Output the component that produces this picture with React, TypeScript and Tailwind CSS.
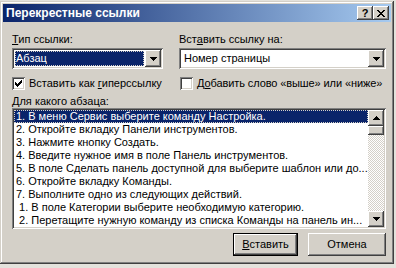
import React from 'react';

const raised =
  'shadow-[inset_-1px_-1px_#404040,inset_1px_1px_#ffffff,inset_-2px_-2px_#808080,inset_2px_2px_#d4d0c8]';
const sunken =
  'shadow-[inset_1px_1px_#808080,inset_-1px_-1px_#ffffff,inset_2px_2px_#404040,inset_-2px_-2px_#d4d0c8]';

function ArrowDown() {
  return (
    <svg width="7" height="4" viewBox="0 0 7 4" shapeRendering="crispEdges">
      <path d="M0 0h7v1H0zM1 1h5v1H1zM2 2h3v1H2zM3 3h1v1H3z" fill="#000" />
    </svg>
  );
}

function ArrowUp() {
  return (
    <svg width="7" height="4" viewBox="0 0 7 4" shapeRendering="crispEdges">
      <path d="M3 0h1v1H3zM2 1h3v1H2zM1 2h5v1H1zM0 3h7v1H0z" fill="#000" />
    </svg>
  );
}

function Check() {
  return (
    <svg width="7" height="7" viewBox="0 0 7 7" shapeRendering="crispEdges">
      <path
        d="M6 0h1v3H6zM5 1h1v3H5zM0 2h1v3H0zM4 2h1v3H4zM1 3h1v3H1zM3 3h1v3H3zM2 4h1v3H2z"
        fill="#000"
      />
    </svg>
  );
}

function DropButton() {
  return (
    <div className={`w-[16px] h-[17px] bg-[#d4d0c8] ${raised} flex items-center justify-center`}>
      <ArrowDown />
    </div>
  );
}

function Combo({ value, selected }: { value: string; selected?: boolean }) {
  return (
    <div className={`h-[21px] bg-white ${sunken} p-[2px] flex`}>
      <div className="flex-1 p-[1px]">
        {selected ? (
          <div className="h-full bg-[#0a246a] text-white outline outline-1 outline-dotted outline-[#d4d0c8] -outline-offset-1 pl-[1px] leading-[15px]">
            {value}
          </div>
        ) : (
          <div className="h-full pl-[2px] leading-[15px]">{value}</div>
        )}
      </div>
      <DropButton />
    </div>
  );
}

function CheckBox({ checked }: { checked?: boolean }) {
  return (
    <div className={`w-[13px] h-[13px] bg-white ${sunken} flex items-center justify-center shrink-0`}>
      {checked && <Check />}
    </div>
  );
}

const items = [
  '1. В меню Сервис выберите команду Настройка.',
  '2. Откройте вкладку Панели инструментов.',
  '3. Нажмите кнопку Создать.',
  '4. Введите нужное имя в поле Панель инструментов.',
  '5. В поле Сделать панель доступной для выберите шаблон или до...',
  '6. Откройте вкладку Команды.',
  '7. Выполните одно из следующих действий.',
  ' 1. В поле Категории выберите необходимую категорию.',
  ' 2. Перетащите нужную команду из списка Команды на панель ин...',
];

export default function App() {
  return (
    <div className="w-[396px] h-[268px] overflow-hidden bg-[#e4e2dc] pt-[1px] font-['Liberation_Sans',Arial,sans-serif] text-[11px] leading-[13px] text-black">
      <div
        className={`w-[394px] h-[263px] bg-[#d4d0c8] p-[3px] flex flex-col shadow-[inset_-1px_-1px_#404040,inset_1px_1px_#d4d0c8,inset_-2px_-2px_#808080,inset_2px_2px_#ffffff]`}
      >
        {/* заголовок */}
        <div className="h-[18px] flex items-center bg-[linear-gradient(90deg,#0a246a,#a6caf0)] pl-[3px] pr-[2px]">
          <span className="flex-1 text-white font-bold text-[12px]">Перекрестные ссылки</span>
          <div className={`w-[16px] h-[14px] bg-[#d4d0c8] ${raised} flex items-center justify-center font-bold text-[11px] leading-none`}>
            ?
          </div>
          <div className={`w-[16px] h-[14px] bg-[#d4d0c8] ${raised} flex items-center justify-center`}>
            <svg width="8" height="7" viewBox="0 0 8 7" shapeRendering="crispEdges">
              <path
                d="M0 0h2v1H0zM6 0h2v1H6zM1 1h2v1H1zM5 1h2v1H5zM2 2h4v1H2zM3 3h2v1H3zM2 4h4v1H2zM1 5h2v1H1zM5 5h2v1H5zM0 6h2v1H0zM6 6h2v1H6z"
                fill="#000"
              />
            </svg>
          </div>
        </div>

        <div className="flex-1 pl-[9px] pr-[5px] pt-[11px] flex flex-col">
          <div className="flex gap-[16px]">
            <div className="w-[151px] flex flex-col gap-[1px]">
              <div className="mb-[1px]">
                <span className="underline">Т</span>ип ссылки:
              </div>
              <Combo value="Абзац" selected />
            </div>
            <div className="flex-1 flex flex-col gap-[1px]">
              <div className="mb-[1px]">
                Вст<span className="underline">а</span>вить ссылку на:
              </div>
              <Combo value="Номер страницы" />
            </div>
          </div>

          <div className="flex mt-[8px] h-[13px]">
            <div className="w-[167px] flex items-center gap-[4px]">
              <CheckBox checked />
              <span>
                Вставить как <span className="underline">г</span>иперссылку
              </span>
            </div>
            <div className="flex items-center gap-[4px] pl-[1px] whitespace-nowrap tracking-[-0.1px]">
              <CheckBox />
              <span>
                Д<span className="underline">о</span>бавить слово «выше» или «ниже»
              </span>
            </div>
          </div>

          <div className="mt-[5px]">
            <span className="underline">Д</span>ля какого абзаца:
          </div>

          <div className={`h-[121px] bg-white ${sunken} p-[2px] flex`}>
            <div className="flex-1 flex flex-col overflow-hidden">
              {items.map((t, i) => (
                <div
                  key={i}
                  className={`h-[13px] whitespace-pre overflow-hidden pl-[2px] ${
                    i === 0
                      ? 'bg-[#0a246a] text-white outline outline-1 outline-dotted outline-[#d4d0c8] -outline-offset-1'
                      : ''
                  }`}
                >
                  {t}
                </div>
              ))}
            </div>
            <div className="w-[16px] flex flex-col">
              <div className={`h-[16px] bg-[#d4d0c8] ${raised} flex items-center justify-center`}>
                <ArrowUp />
              </div>
              <div className={`h-[9px] bg-[#d4d0c8] ${raised}`} />
              <div className="flex-1 bg-[repeating-conic-gradient(#d4d0c8_0_25%,#ffffff_0_50%)] bg-[length:2px_2px]" />
              <div className={`h-[16px] bg-[#d4d0c8] ${raised} flex items-center justify-center`}>
                <ArrowDown />
              </div>
            </div>
          </div>

          <div className="mt-[4px] flex justify-end gap-[10px]">
            <div className="w-[65px] h-[23px] border border-black">
              <div className={`h-full bg-[#d4d0c8] ${raised} flex items-center justify-center`}>
                <span>
                  <span className="underline">В</span>ставить
                </span>
              </div>
            </div>
            <div className={`w-[78px] h-[23px] bg-[#d4d0c8] ${raised} flex items-center justify-center`}>
              Отмена
            </div>
          </div>
        </div>
      </div>
    </div>
  );
}
